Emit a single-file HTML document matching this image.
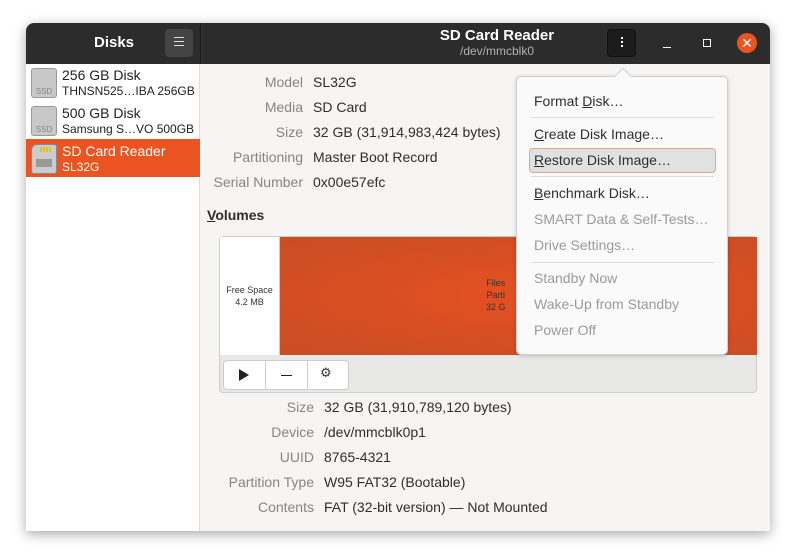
<!DOCTYPE html>
<html><head><style>
*{margin:0;padding:0;box-sizing:border-box}
body{width:796px;height:560px;background:#fff;font-family:"Liberation Sans","DejaVu Sans",sans-serif;position:relative;overflow:hidden}
.a{position:absolute}
.win{left:26px;top:23px;width:744px;height:508px;background:#f6f5f4;border-radius:8px 8px 0 0;box-shadow:0 3px 12px rgba(0,0,0,.35);overflow:hidden}
.hdr{left:0;top:0;width:744px;height:41px;background:#2c2c2c}
.lbl{color:#858585;font-size:14px;text-align:right}
.val{color:#2e2e2e;font-size:14px}
.mi{left:17px;font-size:14px;color:#2e2e2e}
.dis{color:#9a9a9a}
.sep{left:14px;width:183px;height:1px;background:#dcdcdc}
u{text-decoration:underline}
</style></head><body>
<div class="a win">
 <div class="a hdr"></div>
 <div class="a" style="left:174px;top:0;width:1px;height:41px;background:#1e1e1e"></div>
 <div class="a" style="left:68px;top:11px;color:#fff;font-weight:bold;font-size:15px">Disks</div>
 <div class="a" style="left:139px;top:6px;width:28px;height:28px;background:#444;border-radius:4px"></div>
 <div class="a" style="left:148px;top:14px;width:10px;height:1px;background:#ddd;box-shadow:0 4px 0 #ddd,0 8px 0 #ddd"></div>
 <div class="a" style="left:366px;top:4px;width:210px;text-align:center;color:#fff;font-weight:bold;font-size:15px">SD Card Reader</div>
 <div class="a" style="left:366px;top:21px;width:210px;text-align:center;color:#b0b0b0;font-size:12px">/dev/mmcblk0</div>
 <div class="a" style="left:581px;top:6px;width:29px;height:28px;background:#1c1c1c;border:1px solid #111;border-radius:4px"></div>
 <div class="a" style="left:595px;top:14px;width:2px;height:2px;background:#fff;box-shadow:0 4px 0 #fff,0 8px 0 #fff"></div>
 <div class="a" style="left:637px;top:24px;width:8px;height:1px;background:#fff"></div>
 <div class="a" style="left:677px;top:16px;width:8px;height:8px;border:1px solid #fff"></div>
 <div class="a" style="left:711px;top:10px;width:20px;height:20px;border-radius:50%;background:#e95420;color:#fff;font-size:14px;line-height:20px;text-align:center">✕</div>

 <div class="a" style="left:0;top:41px;width:174px;height:467px;background:#fff;border-right:1px solid #dcdcdc"></div>
 <div class="a" style="left:0;top:116px;width:174px;height:38px;background:#e95420"></div>
 <div class="a" style="left:5px;top:45px;width:26px;height:30px;background:#c8c8c8;border:1px solid #999;border-radius:3px;font-size:8px;color:#888;padding-top:18px;text-align:center">SSD</div>
 <div class="a" style="left:5px;top:83px;width:26px;height:30px;background:#c8c8c8;border:1px solid #999;border-radius:3px;font-size:8px;color:#888;padding-top:18px;text-align:center">SSD</div>
 <div class="a" style="left:5px;top:121px;width:26px;height:30px;background:#ccc;border:1px solid #888;border-radius:6px 3px 3px 3px"></div>
 <div class="a" style="left:14px;top:124px;width:12px;height:5px;background:repeating-linear-gradient(90deg,#e4c31f 0 2px,#ccc 2px 3px)"></div>
 <div class="a" style="left:10px;top:136px;width:16px;height:8px;background:#999"></div>
 <div class="a" style="left:36px;top:44px;font-size:14px;color:#222">256 GB Disk</div>
 <div class="a" style="left:36px;top:61px;font-size:12px;color:#222">THNSN525…IBA 256GB</div>
 <div class="a" style="left:36px;top:82px;font-size:14px;color:#222">500 GB Disk</div>
 <div class="a" style="left:36px;top:99px;font-size:12px;color:#222">Samsung S…VO 500GB</div>
 <div class="a" style="left:36px;top:120px;font-size:14px;color:#fff">SD Card Reader</div>
 <div class="a" style="left:36px;top:137px;font-size:12px;color:#fff">SL32G</div>

 <div class="a lbl" style="left:160px;width:117px;top:51px">Model</div><div class="a val" style="left:287px;top:51px">SL32G</div>
 <div class="a lbl" style="left:160px;width:117px;top:76px">Media</div><div class="a val" style="left:287px;top:76px">SD Card</div>
 <div class="a lbl" style="left:160px;width:117px;top:101px">Size</div><div class="a val" style="left:287px;top:101px">32 GB (31,914,983,424 bytes)</div>
 <div class="a lbl" style="left:160px;width:117px;top:126px">Partitioning</div><div class="a val" style="left:287px;top:126px">Master Boot Record</div>
 <div class="a lbl" style="left:160px;width:117px;top:151px">Serial Number</div><div class="a val" style="left:287px;top:151px">0x00e57efc</div>
 <div class="a" style="left:181px;top:184px;font-size:14px;font-weight:bold;color:#2e2e2e"><u>V</u>olumes</div>

 <div class="a" style="left:193px;top:213px;width:538px;height:157px;background:#e8e8e7;border:1px solid #cdcdcd;border-radius:4px"></div>
 <div class="a" style="left:194px;top:214px;width:60px;height:118px;background:#fff;border-right:1px solid #ccc;font-size:9px;color:#333;text-align:center;padding-top:47px;line-height:12px">Free Space<br>4.2 MB</div>
 <div class="a" style="left:254px;top:214px;width:477px;height:118px;background:radial-gradient(ellipse at 55% 50%,#e55122,#c94d23)"></div>
 <div class="a" style="left:460px;top:254px;font-size:9px;color:#333;line-height:12px;text-align:center">Files<br>Parti<br>32 G</div>
 <div class="a" style="left:197px;top:337px;width:126px;height:30px;background:#fff;border:1px solid #ccc;border-radius:4px"></div>
 <div class="a" style="left:239px;top:338px;width:1px;height:28px;background:#ccc"></div>
 <div class="a" style="left:281px;top:338px;width:1px;height:28px;background:#ccc"></div>
 <div class="a" style="left:213px;top:346px;width:0;height:0;border-left:10px solid #222;border-top:6px solid transparent;border-bottom:6px solid transparent"></div>
 <div class="a" style="left:255px;top:352px;width:11px;height:1px;background:#222"></div>
 <div class="a" style="left:294px;top:342px;font-size:13px;color:#333">⚙</div>

 <div class="a lbl" style="left:170px;width:118px;top:376px">Size</div><div class="a val" style="left:298px;top:376px">32 GB (31,910,789,120 bytes)</div>
 <div class="a lbl" style="left:170px;width:118px;top:401px">Device</div><div class="a val" style="left:298px;top:401px">/dev/mmcblk0p1</div>
 <div class="a lbl" style="left:170px;width:118px;top:426px">UUID</div><div class="a val" style="left:298px;top:426px">8765-4321</div>
 <div class="a lbl" style="left:170px;width:118px;top:451px">Partition Type</div><div class="a val" style="left:298px;top:451px">W95 FAT32 (Bootable)</div>
 <div class="a lbl" style="left:170px;width:118px;top:476px">Contents</div><div class="a val" style="left:298px;top:476px">FAT (32-bit version) — Not Mounted</div>
</div>

<div class="a" style="left:516px;top:76px;width:212px;height:279px;background:#fafafa;border:1px solid #cfcfcf;border-radius:5px;box-shadow:0 1px 4px rgba(0,0,0,.2)">
 <div class="a" style="left:100px;top:-7px;width:12px;height:12px;background:#fafafa;border-left:1px solid #cfcfcf;border-top:1px solid #cfcfcf;transform:rotate(45deg)"></div>
 <div class="a mi" style="top:16px">Format <u>D</u>isk…</div>
 <div class="a sep" style="top:40px"></div>
 <div class="a mi" style="top:49px"><u>C</u>reate Disk Image…</div>
 <div class="a" style="left:12px;top:71px;width:187px;height:25px;background:#e1e1e1;border:1px solid #e8a08a;border-radius:4px"></div>
 <div class="a mi" style="top:75px"><u>R</u>estore Disk Image…</div>
 <div class="a sep" style="top:99px"></div>
 <div class="a mi" style="top:108px"><u>B</u>enchmark Disk…</div>
 <div class="a mi dis" style="top:134px">SMART Data &amp; Self-Tests…</div>
 <div class="a mi dis" style="top:160px">Drive Settings…</div>
 <div class="a sep" style="top:185px"></div>
 <div class="a mi dis" style="top:193px">Standby Now</div>
 <div class="a mi dis" style="top:219px">Wake-Up from Standby</div>
 <div class="a mi dis" style="top:245px">Power Off</div>
</div>
</body></html>
